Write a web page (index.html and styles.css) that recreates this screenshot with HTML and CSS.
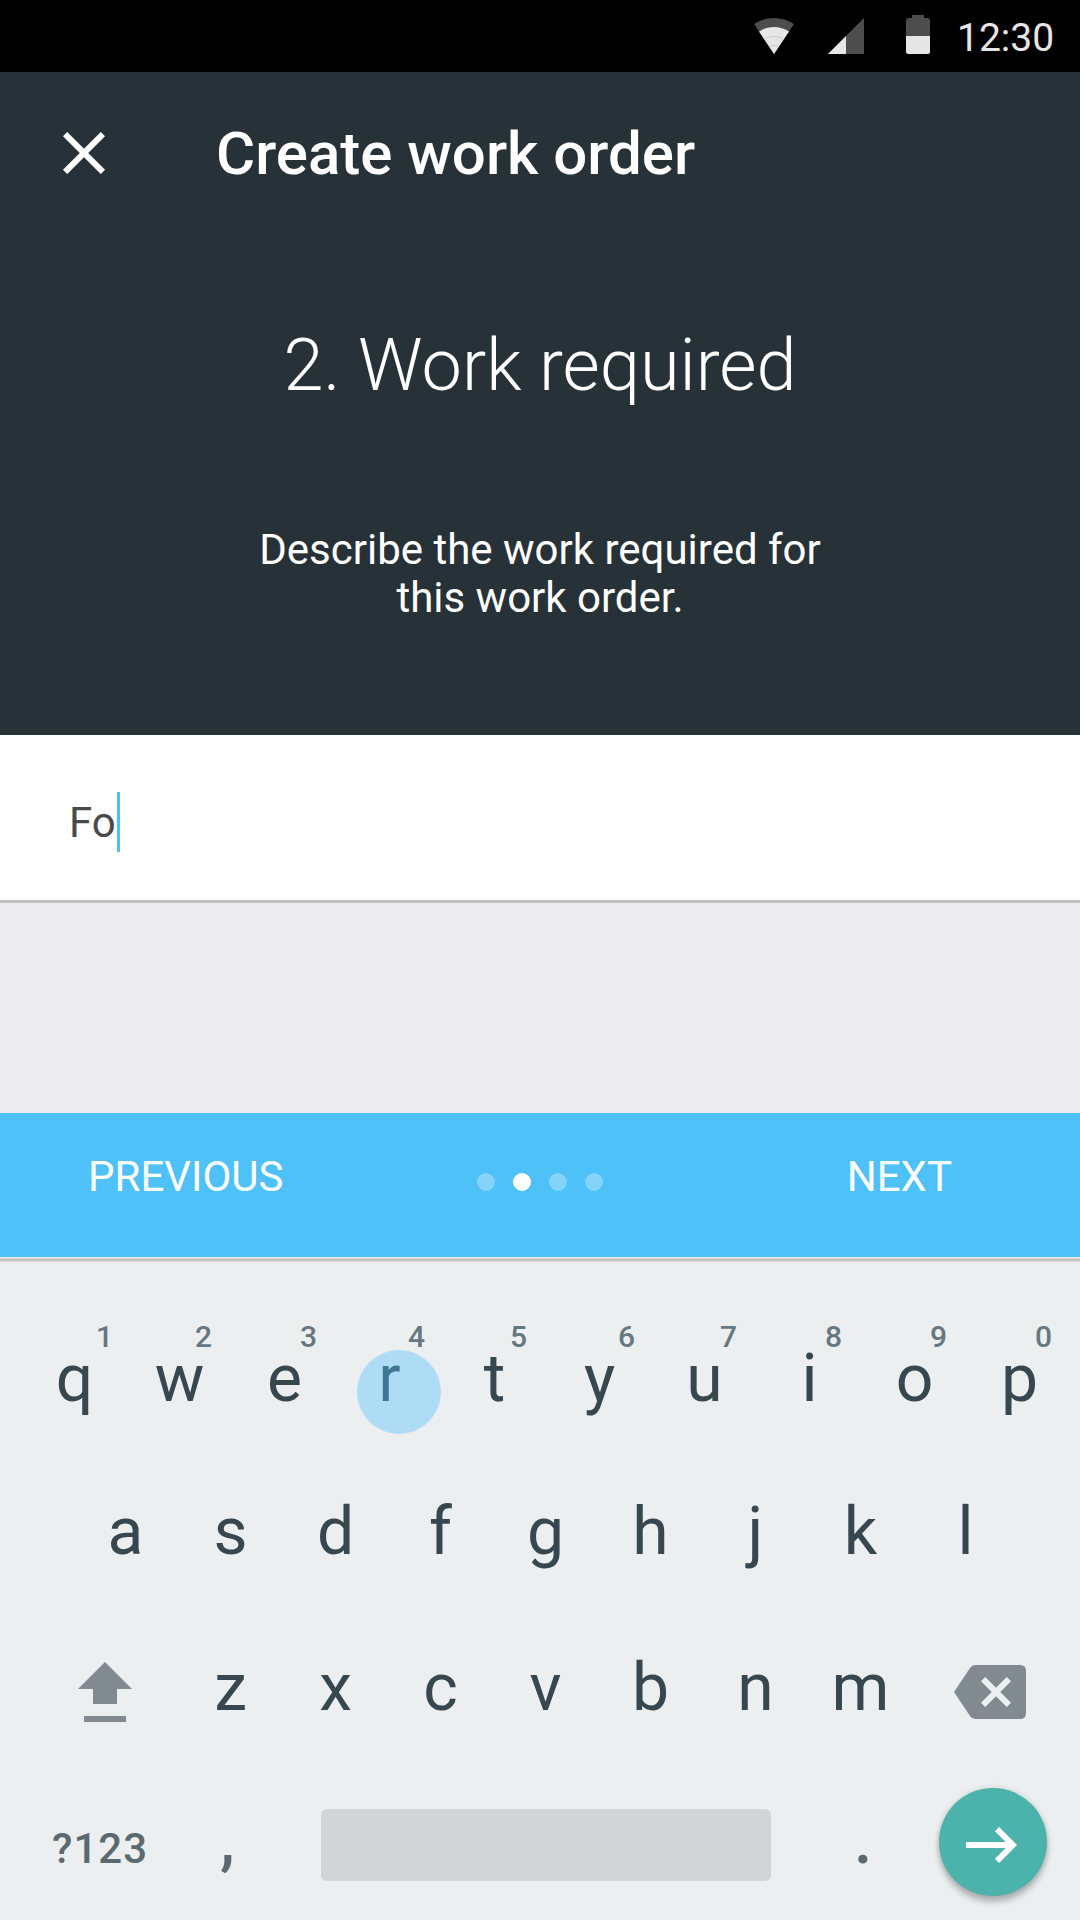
FILE: index.html
```html
<!DOCTYPE html>
<html lang="en">
<head>
<meta charset="utf-8">
<title>Create work order</title>
<link rel="stylesheet" href="styles.css">
</head>
<body>
<div class="screen">
  <div class="status-bar">
    <svg class="icon-wifi" width="40" height="36" viewBox="0 0 40 36">
      <path fill="#4d4d4d" d="M20 36 0 6C12 -2 28 -2 40 6Z"/>
      <path fill="#e6e6e6" d="M20 36 5 13.500C14 7.500 26 7.500 35 13.500Z"/>
      <path fill="none" stroke="#bdbdbd" stroke-width=".7" d="M11.500 20.500Q20 16 28.500 20.500M16 28.500Q20 26.300 24 28.500"/>
    </svg>
    <svg class="icon-signal" width="36" height="36" viewBox="0 0 36 36">
      <path fill="#4d4d4d" d="M0 36H36V0Z"/>
      <path fill="#e6e6e6" d="M0 36H18V18Z"/>
    </svg>
    <svg class="icon-battery" width="24" height="39" viewBox="0 0 24 39">
      <path fill="#4d4d4d" d="M6 0H18V3H21.500Q24 3 24 5.500V21H0V5.500Q0 3 2.500 3H6Z"/>
      <path fill="#e6e6e6" d="M0 21H24V36.500Q24 39 21.500 39H2.500Q0 39 0 36.500Z"/>
    </svg>
    <span class="clock">12:30</span>
  </div>

  <header class="header">
    <div class="toolbar">
      <svg class="icon-close" width="42" height="42" viewBox="0 0 42 42">
        <path stroke="#fff" stroke-width="6" d="M2.100 2.100 39.900 39.900M39.900 2.100 2.100 39.900"/>
      </svg>
      <h1 class="title">Create work order</h1>
    </div>
    <h2 class="step-title">2. Work required</h2>
    <p class="step-text">Describe the work required for<br>this work order.</p>
  </header>

  <div class="field"><span class="field-value">Fo</span><span class="caret"></span></div>
  <div class="spacer"></div>

  <nav class="stepper">
    <span class="step-link">PREVIOUS</span>
    <span class="dots"><i class="dot"></i><i class="dot dot-active"></i><i class="dot"></i><i class="dot"></i></span>
    <span class="step-link step-next">NEXT</span>
  </nav>
  <div class="divider"></div>

  <div class="keyboard">
    <div class="row row-top">
      <span class="key">q<sup class="hint hint-one">1</sup></span>
      <span class="key">w<sup class="hint">2</sup></span>
      <span class="key">e<sup class="hint">3</sup></span>
      <span class="key key-r">r<sup class="hint hint-far">4</sup><i class="touch"></i></span>
      <span class="key">t<sup class="hint">5</sup></span>
      <span class="key">y<sup class="hint hint-far">6</sup></span>
      <span class="key">u<sup class="hint">7</sup></span>
      <span class="key">i<sup class="hint">8</sup></span>
      <span class="key">o<sup class="hint">9</sup></span>
      <span class="key">p<sup class="hint">0</sup></span>
    </div>
    <div class="row row-home">
      <span class="key">a</span><span class="key">s</span><span class="key">d</span><span class="key">f</span><span class="key">g</span><span class="key">h</span><span class="key">j</span><span class="key">k</span><span class="key">l</span>
    </div>
    <div class="row row-lower">
      <span class="key key-shift">
        <svg width="54" height="60" viewBox="0 0 54 60"><path fill="#808a8f" d="M27 0 54 27H39V42H15V27H0ZM6 54H48V60H6Z"/></svg>
      </span>
      <span class="key">z</span><span class="key">x</span><span class="key">c</span><span class="key">v</span><span class="key">b</span><span class="key">n</span><span class="key">m</span>
      <span class="key key-delete">
        <svg width="72" height="54" viewBox="0 0 72 54">
          <path fill="#808a8f" d="M21 0H66Q72 0 72 6V48Q72 54 66 54H21Q18 54 16 51L0 27 16 3Q18 0 21 0Z"/>
          <path stroke="#ebeff0" stroke-width="6" d="M29.100 14.100 54.900 39.900M54.900 14.100 29.100 39.900"/>
        </svg>
      </span>
    </div>
    <div class="row row-bottom">
      <span class="key-symbols">?123</span>
      <span class="key-comma">,</span>
      <span class="key-space"></span>
      <span class="key-period">.</span>
      <span class="key-enter">
        <svg width="52" height="36" viewBox="0 0 52 36"><path fill="none" stroke="#fff" stroke-width="6" d="M0 18H46M31 2.100 46.800 18 31 33.900"/></svg>
      </span>
    </div>
  </div>
</div>
</body>
</html>
```
FILE: styles.css
```css
* { box-sizing: border-box; margin: 0; padding: 0; }
body { font-family: Roboto, sans-serif; background: #ebeff0; }
svg { display: block; }
i { font-style: normal; }

.screen { width: 1080px; height: 1920px; display: flex; flex-direction: column; overflow: hidden; }

.status-bar { height: 72px; background: #000; display: flex; justify-content: flex-end; padding: 0 26px 0 0; }
.icon-wifi { margin: 18px 34px 0 0; }
.icon-signal { margin: 18px 42px 0 0; }
.icon-battery { margin: 15px 27px 0 0; }
.clock { width: 97px; color: #e6e6e6; font-size: 39px; line-height: 76px; white-space: nowrap; }

.header { height: 663px; background: #273238; color: #fff; text-align: center; }
.toolbar { height: 162px; display: flex; align-items: center; padding-left: 63px; gap: 111px; }
.title { font-size: 60px; font-weight: 500; line-height: 73px; padding-top: 1px; white-space: nowrap; }
.step-title { margin-top: 88px; font-size: 72px; font-weight: 300; line-height: 87px; }
.step-text { margin-top: 117px; font-size: 42px; line-height: 48px; }

.field { height: 168px; background: #fff; border-bottom: 3px solid #c2c2c2; display: flex; padding: 57px 0 0 69px; }
.field-value { color: #4a4a4a; font-size: 42px; line-height: 62px; width: 48px; }
.caret { width: 3px; height: 60px; background: #4fc1f9; }
.spacer { height: 210px; background: #ebebf0; }

.stepper { height: 144px; background: #4fc1f9; color: #fff; display: grid; grid-template-columns: 389px 126px 1fr; padding: 0 128px 0 88px; font-size: 42px; line-height: 127px; }
.step-next { text-align: right; }
.dots { display: flex; gap: 18px; margin-top: 60px; }
.dot { width: 18px; height: 18px; border-radius: 50%; background: rgba(255, 255, 255, .3); }
.dot-active { background: #fff; }
.divider { height: 5px; background: linear-gradient(#f0f4f5 1px, #d5d5d5 1px 2px, #c4c4c4 2px 4px, #d8dada 4px); }

.keyboard { flex: 1; padding-top: 40px; color: #37474f; font-size: 66px; }
.row { display: flex; height: 153px; line-height: 153px; }
.key { width: 105px; flex: none; text-align: center; position: relative; }
.row-top { padding-left: 22px; }
.row-home { padding-left: 73px; }
.row-lower { height: 159px; line-height: 159px; }
.hint { position: absolute; left: 68px; top: 17px; width: 17px; font-size: 30px; font-weight: 500; line-height: 36px; color: #667780; }
.hint-far { left: 71px; }
.hint-one { left: 74px; }
.touch { position: absolute; left: 20px; top: 48px; width: 84px; height: 84px; border-radius: 50%; background: rgba(79, 193, 249, .4); }
.key-shift { width: 178px; padding: 54px 0 0 78px; }
.key-delete { padding: 57px 0 0 41px; }

.row-bottom { align-items: center; color: #5b6970; font-weight: 500; }
.key-symbols { width: 168px; padding: 10px 0 0 52px; font-size: 42px; letter-spacing: 1px; }
.key-comma { width: 153px; padding: 0 0 6px 52px; }
.key-space { width: 450px; height: 72px; margin-top: 3px; border-radius: 6px; background: #d1d5d8; }
.key-period { width: 168px; padding: 0 0 6px 83px; }
.key-enter { width: 108px; height: 108px; border-radius: 50%; background: #4cb3ac; margin-top: -3px; padding: 39px 0 0 27px; box-shadow: 0 6px 6px rgba(0, 0, 0, .24), 0 0 6px rgba(0, 0, 0, .12); }
```
